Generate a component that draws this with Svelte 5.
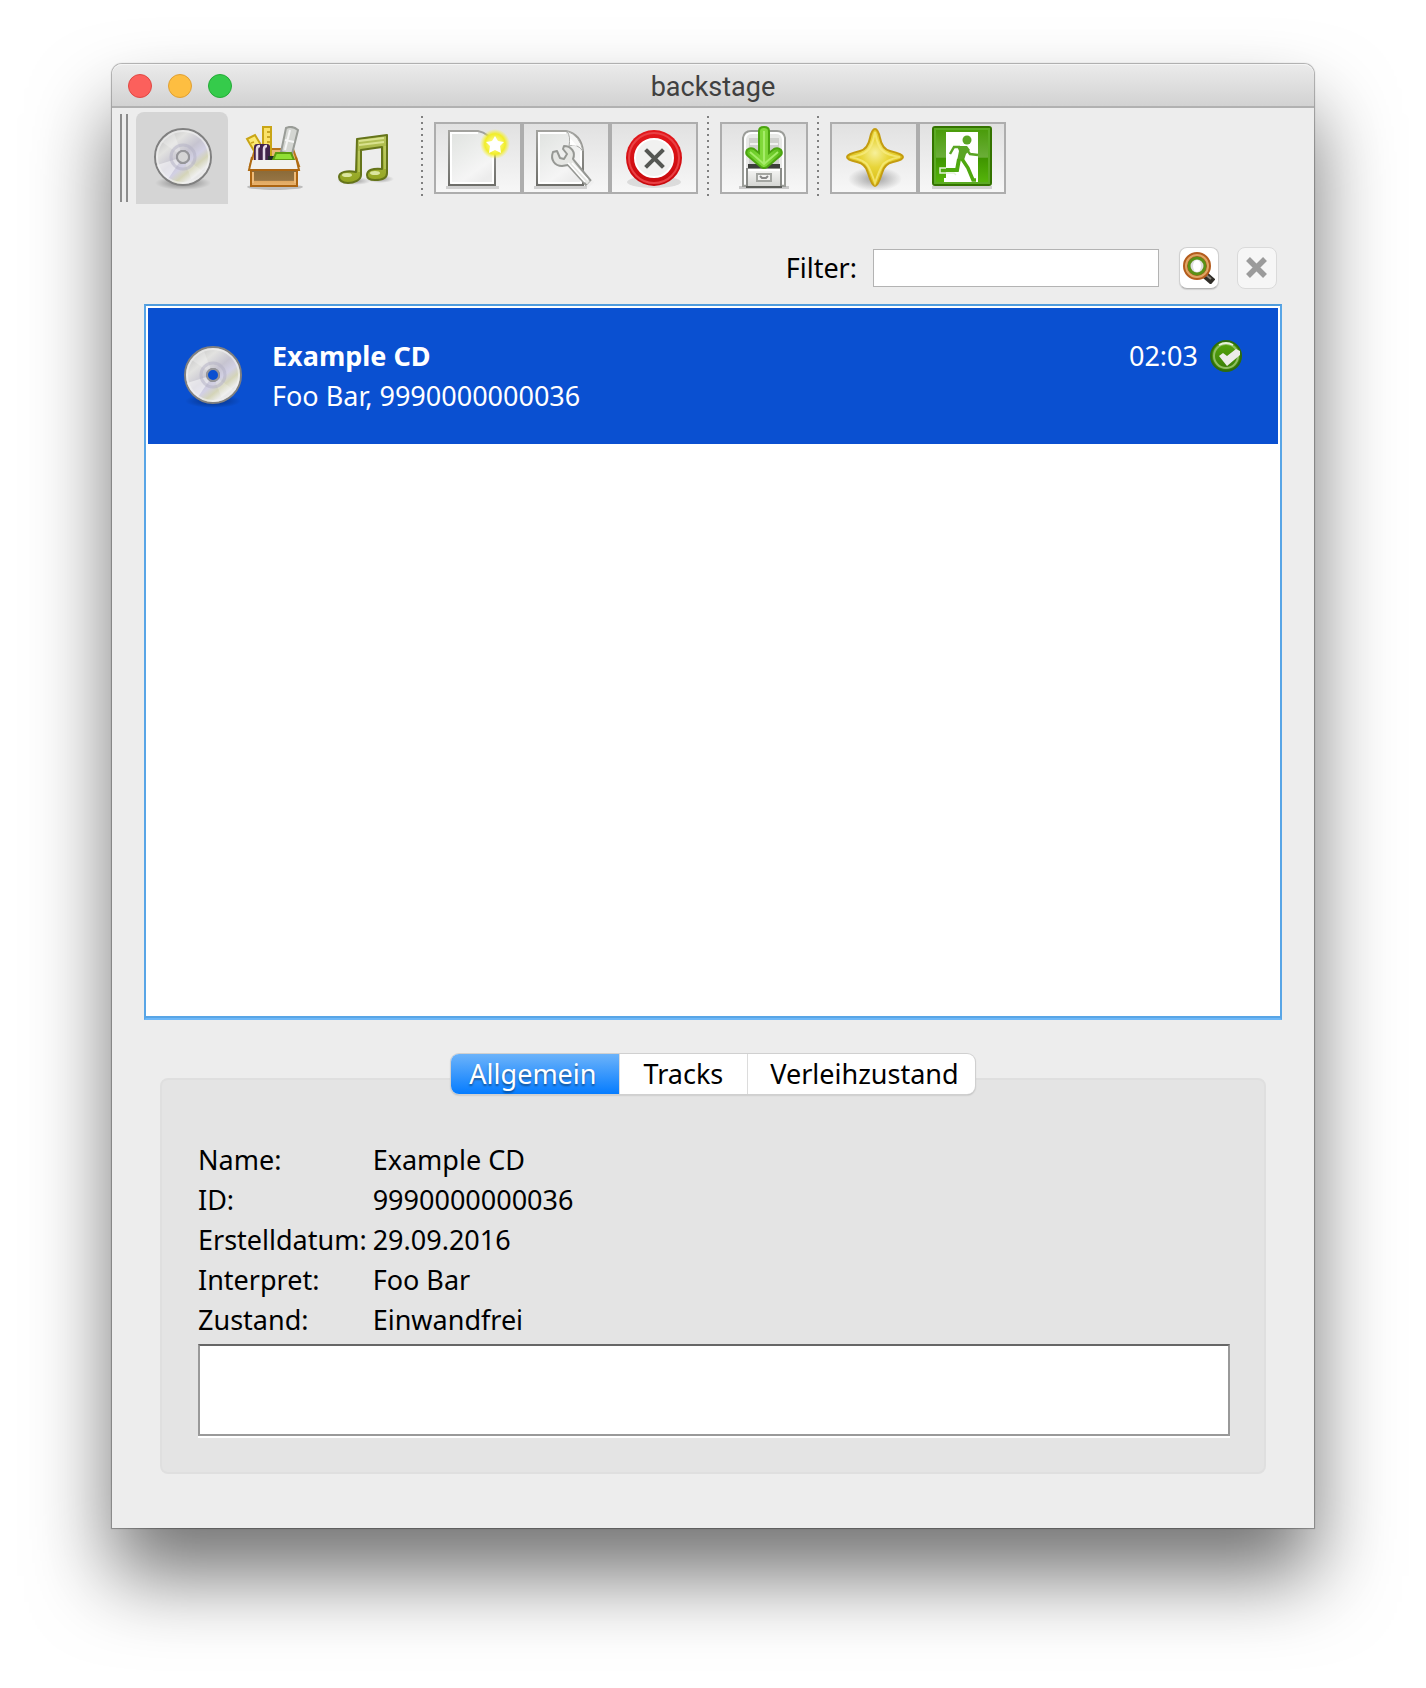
<script>
  const details = [
    ['Name:', 'Example CD'],
    ['ID:', '9990000000036'],
    ['Erstelldatum:', '29.09.2016'],
    ['Interpret:', 'Foo Bar'],
    ['Zustand:', 'Einwandfrei']
  ];
  const tabs = ['Allgemein', 'Tracks', 'Verleihzustand'];
  let activeTab = $state(0);
  let filter = $state('');
  let note = $state('');
</script>

{#snippet disc(id, hollow)}
  <svg class="icon" viewBox="0 0 64 64" aria-hidden="true">
    <defs>
      <linearGradient id="{id}-body" x1="0.15" y1="0.1" x2="0.85" y2="0.95">
        <stop offset="0" stop-color="#c6c6c6" />
        <stop offset="0.22" stop-color="#e2e2e0" />
        <stop offset="0.45" stop-color="#c6c4d0" />
        <stop offset="0.6" stop-color="#d2d0e4" />
        <stop offset="0.72" stop-color="#d4d4b8" />
        <stop offset="0.84" stop-color="#ececec" />
        <stop offset="1" stop-color="#c0c0c0" />
      </linearGradient>
      <radialGradient id="{id}-shade">
        <stop offset="0" stop-color="#000" stop-opacity="0.4" />
        <stop offset="1" stop-color="#000" stop-opacity="0" />
      </radialGradient>
    </defs>
    <ellipse cx="33" cy="57" rx="28" ry="7" fill="url(#{id}-shade)" />
    <path
      fill-rule="evenodd"
      fill="url(#{id}-body)"
      stroke="#808080"
      stroke-width="2"
      d="M33 3a28 28 0 1 1 0 56a28 28 0 1 1 0-56zM33 25a6 6 0 1 0 0 12a6 6 0 1 0 0-12z"
    />
    <path d="M33 31L12 16A26 26 0 0 1 24 7z" fill="#fff" opacity="0.25" />
    <path d="M33 31L54 46A26 26 0 0 1 42 55z" fill="#fff" opacity="0.2" />
    <path d="M33 31L7 39A27 27 0 0 0 18 53z" fill="#fff" opacity="0.5" />
    <circle cx="33" cy="31" r="26" fill="none" stroke="#f4f4f4" stroke-width="2" opacity="0.6" />
    <circle cx="33" cy="31" r="12" fill="none" stroke="#b2afc4" stroke-width="3" opacity="0.5" />
    <circle cx="33" cy="31" r="6" fill={hollow} stroke="#96969a" stroke-width="2" />
  </svg>
{/snippet}

<div class="desktop">
  <main class="window">
    <header class="titlebar">
      <div class="lights">
        <button class="light close" aria-label="Schließen"></button>
        <button class="light minimise" aria-label="Minimieren"></button>
        <button class="light zoom" aria-label="Vergrößern"></button>
      </div>
      <h1>backstage</h1>
    </header>

    <div class="toolbar" role="toolbar" aria-label="Werkzeuge">
      <span class="grip"></span>
      <button class="mode selected" aria-label="CDs">{@render disc('tool-disc', '#d5d5d5')}</button>
      <button class="mode" aria-label="Material">
        <svg class="icon" viewBox="0 0 64 64" aria-hidden="true">
          <defs>
            <linearGradient id="box-front" x1="0" y1="0" x2="0" y2="1">
              <stop offset="0" stop-color="#8a6a38" />
              <stop offset="0.65" stop-color="#967443" />
              <stop offset="0.7" stop-color="#e0a860" />
              <stop offset="1" stop-color="#e9b572" />
            </linearGradient>
          </defs>
          <ellipse cx="33" cy="61" rx="28" ry="3" fill="#000" opacity="0.2" />
          <path d="M13 23H51L57 40H8z" fill="#e9b877" stroke="#b8741c" stroke-width="2" />
          <path d="M5 13l8-4 9 15-7 6z" fill="#fbe972" stroke="#c9a516" stroke-width="2" />
          <path d="M9 17l3-1m0 6l4-2" stroke="#c9a516" stroke-width="1.5" />
          <path d="M21 1h8v30h-8z" fill="#fbe267" stroke="#c9a516" stroke-width="2" />
          <path d="M25 6h3m-3 5h3m-3 5h3m-3 5h3" stroke="#b8920c" stroke-width="1.5" />
          <path d="M44 2q6-3 12 2L50 28l-11-2z" fill="#d4d6d2" stroke="#999c97" stroke-width="2" />
          <path d="M48 4l-5 20m0-10l9 2" stroke="#f5f5f5" stroke-width="2" />
          <path d="M12 35V21q0-3 3-3h10q3 0 3 3v14z" fill="#42234b" />
          <path d="M15 35V23q0-3 3-3m4 15V23q0-3 3-3" stroke="#e7dbe9" stroke-width="2.5" fill="none" />
          <path d="M26 30h8v5h-8z" fill="#222c27" />
          <path d="M34 27h15l3 7H31z" fill="#90df35" stroke="#5c9b12" stroke-width="2" />
          <path d="M9 34H55L57 43H7z" fill="#f1f1ee" />
          <path d="M10 31l-3 13h50l-3-13" fill="none" stroke="#b06b12" stroke-width="2" />
          <path d="M9 44h46v16H9z" fill="url(#box-front)" stroke="#ac6512" stroke-width="2" />
          <path d="M11 46v11m42-11v11" stroke="#efbc7a" stroke-width="2" />
        </svg>
      </button>
      <button class="mode" aria-label="Musik">
        <svg class="icon" viewBox="0 0 64 64" aria-hidden="true">
          <defs>
            <linearGradient id="note-fill" x1="0" y1="0" x2="0" y2="1">
              <stop offset="0" stop-color="#b6c35c" />
              <stop offset="1" stop-color="#93a51f" />
            </linearGradient>
            <radialGradient id="note-shade">
              <stop offset="0" stop-color="#000" stop-opacity="0.35" />
              <stop offset="1" stop-color="#000" stop-opacity="0" />
            </radialGradient>
          </defs>
          <ellipse cx="20" cy="55" rx="17" ry="4" fill="url(#note-shade)" />
          <ellipse cx="46" cy="53" rx="14" ry="4" fill="url(#note-shade)" />
          <path
            d="M23 13L53 9V47C53 53 46 54 41 54C36 54 33 52 33 49C33 44 39 42 48 43V21L27 24V49C27 54 20 57 14 57C8 57 5 54 5 51C5 46 13 44 22 46z"
            fill="url(#note-fill)" stroke="#65741a" stroke-width="2" stroke-linejoin="round"
          />
          <path d="M25 15L50 12M25 19L50 16" stroke="#d9e28e" stroke-width="2" />
          <path d="M25 25v21M51 20v23" stroke="#c9d573" />
          <ellipse cx="13" cy="49" rx="5" ry="2" fill="#dce6a0" />
          <ellipse cx="41" cy="47" rx="5" ry="2" fill="#dce6a0" />
        </svg>
      </button>

      <span class="separator"></span>
      <div class="group">
        <button class="action" aria-label="Neu">
          <svg class="icon" viewBox="0 0 64 64" aria-hidden="true">
            <defs>
              <linearGradient id="paper" x1="0" y1="0" x2="0.6" y2="1">
                <stop offset="0" stop-color="#dfe2df" />
                <stop offset="0.8" stop-color="#f5f5f5" />
                <stop offset="1" stop-color="#ececec" />
              </linearGradient>
              <linearGradient id="paper-edge" x1="0" y1="0" x2="0" y2="1">
                <stop offset="0" stop-color="#a2a29e" />
                <stop offset="1" stop-color="#6e6e6a" />
              </linearGradient>
              <radialGradient id="glow">
                <stop offset="0" stop-color="#fff" />
                <stop offset="0.3" stop-color="#fbf87c" />
                <stop offset="0.68" stop-color="#f1ed28" />
                <stop offset="1" stop-color="#f5f04c" stop-opacity="0" />
              </radialGradient>
            </defs>
            <path d="M0 60h53v3H0z" fill="#000" opacity="0.15" />
            <path d="M3 5H32Q43 7 49 19V59H3z" fill="url(#paper)" stroke="url(#paper-edge)" stroke-width="2" />
            <path d="M5 57V7H32M5 57H47V22" fill="none" stroke="#fff" stroke-width="2" />
            <circle cx="49" cy="18" r="15" fill="url(#glow)" />
            <path d="M49 10l3 5 6 1-4 4 1 7-6-3-6 3 1-7-4-4 6-1z" fill="#fff" />
          </svg>
        </button>
        <button class="action" aria-label="Bearbeiten">
          <svg class="icon" viewBox="0 0 64 64" aria-hidden="true">
            <path d="M0 60h53v3H0z" fill="#000" opacity="0.15" />
            <path d="M3 5H32Q47 8 49 25V59H3z" fill="url(#paper)" stroke="url(#paper-edge)" stroke-width="2" />
            <path d="M5 57V7H32M5 57H47V25" fill="none" stroke="#fff" stroke-width="2" />
            <path d="M33 5Q37 11 35 20Q43 17 49 25Q46 10 33 5z" fill="#f6f6f5" stroke="#a9aaa7" />
            <path d="M36 12V19L43 20z" fill="#fff" />
            <path
              d="M19 26C16 34 21 40 28 40L34 39L53 60L57 55L43 38L39 33C42 26 37 20 30 20L29 23L33 28L30 33L26 32L23 25z"
              fill="#e6e7e4" stroke="#969894" stroke-width="2" stroke-linejoin="round"
            />
            <path d="M38 37L54 54M34 37L51 56" stroke="#fff" stroke-width="1.5" />
            <path d="M53 61l6-6" stroke="#f0f0f0" stroke-width="3" />
          </svg>
        </button>
        <button class="action" aria-label="Löschen">
          <svg class="icon" viewBox="0 0 64 64" aria-hidden="true">
            <defs>
              <linearGradient id="ring" x1="0" y1="0" x2="0" y2="1">
                <stop offset="0" stop-color="#e4181c" />
                <stop offset="1" stop-color="#c80a0e" />
              </linearGradient>
            </defs>
            <ellipse cx="32" cy="56" rx="27" ry="6" fill="#000" opacity="0.1" />
            <circle cx="32" cy="32" r="28" fill="url(#ring)" />
            <circle cx="32" cy="32" r="25" fill="none" stroke="#e94044" stroke-width="2" />
            <circle cx="32" cy="32" r="19" fill="#f1f1f0" stroke="#fff" stroke-width="2" />
            <path d="M25 25l15 15m0-15l-15 15" stroke="#555753" stroke-width="4" stroke-linecap="square" />
          </svg>
        </button>
      </div>

      <span class="separator"></span>
      <div class="group">
        <button class="action" aria-label="Speichern">
          <svg class="icon" viewBox="0 0 64 64" aria-hidden="true">
            <defs>
              <linearGradient id="arrow" x1="0" y1="0" x2="1" y2="0">
                <stop offset="0" stop-color="#5fc41c" />
                <stop offset="0.5" stop-color="#85dc3e" />
                <stop offset="1" stop-color="#55b716" />
              </linearGradient>
              <linearGradient id="drawer" x1="0" y1="0" x2="0" y2="1">
                <stop offset="0" stop-color="#f6f6f5" />
                <stop offset="1" stop-color="#d4d5d2" />
              </linearGradient>
            </defs>
            <path d="M7 60h50v3H7z" fill="#000" opacity="0.18" />
            <path d="M11 60V12Q12 5 19 5H45Q52 5 53 12V60z" fill="#e8e9e7" stroke="#9b9d99" stroke-width="2" />
            <path d="M13 58V13q1-6 7-6h24q6 0 7 6v45" fill="none" stroke="#fff" stroke-width="2" />
            <path d="M17 12h30v27H17z" fill="#d0d1ce" />
            <path d="M18 18h28M18 27h28" stroke="#f1f1f0" stroke-width="2" />
            <path d="M16 38h32v4H16z" fill="#3c3e3b" />
            <path d="M15 43H49V61H15z" fill="url(#drawer)" stroke="#8a8c88" stroke-width="2" />
            <path d="M14 61H50" stroke="#5c5e5a" stroke-width="2" />
            <path d="M16 44h32" stroke="#fff" stroke-width="2" />
            <rect x="25" y="48" width="14" height="7" fill="#f2f2f1" stroke="#a4a6a2" stroke-width="2" />
            <path d="M28 50l2 2h4l2-2" fill="none" stroke="#888" stroke-width="2" />
            <path
              d="M27 5Q27 1 32 1Q37 1 37 5V27L42 23Q46 21 49 24Q51 28 48 30L35 41Q32 43 29 41L16 30Q13 28 15 24Q18 21 22 23L27 27z"
              fill="url(#arrow)" stroke="#4ba40f" stroke-width="2"
            />
            <path d="M32 5V37M18 26L32 38L46 26" fill="none" stroke="#a5ec68" stroke-width="2" />
          </svg>
        </button>
      </div>

      <span class="separator"></span>
      <div class="group">
        <button class="action" aria-label="Info">
          <svg class="icon" viewBox="0 0 64 64" aria-hidden="true">
            <defs>
              <radialGradient id="gold" cx="0.5" cy="0.42" r="0.5">
                <stop offset="0" stop-color="#f7f09a" />
                <stop offset="0.5" stop-color="#e8d53a" />
                <stop offset="1" stop-color="#dcc01a" />
              </radialGradient>
              <radialGradient id="gold-shade">
                <stop offset="0" stop-color="#000" stop-opacity="0.35" />
                <stop offset="1" stop-color="#000" stop-opacity="0" />
              </radialGradient>
            </defs>
            <ellipse cx="33" cy="53" rx="27" ry="12" fill="url(#gold-shade)" />
            <path
              d="M33 3Q36 3 38 12Q40 23 48 25Q61 28 61 31Q61 34 51 36Q42 38 40 47Q36 60 33 60Q30 60 26 47Q24 38 15 36Q5 34 5 31Q5 28 18 25Q26 23 28 12Q30 3 33 3z"
              fill="url(#gold)" stroke="#c49c10" stroke-width="2"
            />
            <path
              d="M33 6Q36 22 41 25Q45 29 58 31Q43 34 40 40Q37 45 33 57Q29 45 26 40Q23 34 8 31Q21 29 25 25Q30 22 33 6z"
              fill="none" stroke="#f9ee86" stroke-width="2" opacity="0.7"
            />
          </svg>
        </button>
        <button class="action" aria-label="Beenden">
          <svg class="icon" viewBox="0 0 64 64" aria-hidden="true">
            <defs>
              <linearGradient id="exit-sign" x1="0" y1="0" x2="0" y2="1">
                <stop offset="0" stop-color="#479a06" />
                <stop offset="0.52" stop-color="#6bae38" />
                <stop offset="0.54" stop-color="#3f9500" />
                <stop offset="1" stop-color="#58b80c" />
              </linearGradient>
            </defs>
            <path d="M2 60h60v3H2z" fill="#000" opacity="0.15" />
            <rect x="3" y="1" width="58" height="58" rx="2" fill="url(#exit-sign)" stroke="#347300" stroke-width="2" />
            <rect x="5" y="3" width="54" height="54" fill="none" stroke="#5cab24" stroke-width="2" />
            <path d="M16 6H48V56H14V52H16z" fill="#fff" />
            <circle cx="37" cy="14" r="4.5" fill="#5aa524" />
            <path d="M20 28L24 21H30M37 24L40 28L48 29" fill="none" stroke="#5aa524" stroke-width="2.5" />
            <path d="M27 20H37L40 24L36 28L34 34L27 35L29 25z" fill="#5aa524" />
            <path d="M32 33L38 42L43 54H46" fill="none" stroke="#4fa80e" stroke-width="3.5" />
            <path d="M29 33L27 44H11V48" fill="none" stroke="#4fa80e" stroke-width="4" />
            <path d="M16 42H10V47H24L26 49" fill="none" stroke="#e4f2d8" stroke-width="1.5" />
          </svg>
        </button>
      </div>
    </div>

    <form class="filter" onsubmit={(event) => event.preventDefault()}>
      <label for="filter">Filter:</label>
      <input id="filter" type="text" bind:value={filter} />
      <button class="small" aria-label="Suchen">
        <svg class="glass" viewBox="0 0 32 32" aria-hidden="true">
          <path d="M22 23l8 7" stroke="#302d28" stroke-width="7" />
          <path d="M23 23l5 4" stroke="#85827a" stroke-width="2" />
          <circle cx="14" cy="14" r="11" fill="#fff" stroke="#b45c1d" stroke-width="6" />
          <circle cx="14" cy="14" r="11" fill="none" stroke="#dfa565" stroke-width="2" />
          <circle cx="14" cy="14" r="8" fill="#dedede" stroke="#5b9016" stroke-width="3" />
          <ellipse cx="14" cy="14" rx="4" ry="6" fill="#fff" />
        </svg>
      </button>
      <button class="small" type="button" disabled aria-label="Filter löschen">
        <svg class="glass" viewBox="0 0 32 32" aria-hidden="true">
          <path d="M7 7l17 17m0-17L7 24" stroke="#9b9b9b" stroke-width="5.5" />
        </svg>
      </button>
    </form>

    <ul class="list" role="listbox" aria-label="Medien">
      <li class="entry" role="option" aria-selected="true">
        {@render disc('entry-disc', '#0a50d1')}
        <div class="summary">
          <strong>Example CD</strong>
          <span>Foo Bar, 9990000000036</span>
        </div>
        <div class="status">
          <time>02:03</time>
          <svg class="check" viewBox="0 0 32 32" aria-hidden="true">
            <defs>
              <linearGradient id="tick-ground" x1="0" y1="0" x2="0" y2="1">
                <stop offset="0" stop-color="#57a80c" />
                <stop offset="1" stop-color="#397c09" />
              </linearGradient>
            </defs>
            <circle cx="16" cy="16" r="15" fill="url(#tick-ground)" stroke="#2e6c0c" stroke-width="2" />
            <circle cx="16" cy="16" r="12" fill="none" stroke="#8fbe63" stroke-width="2" />
            <path d="M9 5Q16 1 23 5" fill="none" stroke="#e6f0dc" stroke-width="2" />
            <path d="M9 16l4-3 4 3 9-7 4 2v4L17 26z" fill="#ececea" />
          </svg>
        </div>
      </li>
    </ul>

    <section class="details">
      <div class="tabs" role="tablist">
        {#each tabs as tab, index}
          <button
            class="tab"
            class:active={activeTab === index}
            role="tab"
            aria-selected={activeTab === index}
            onclick={() => (activeTab = index)}>{tab}</button
          >
        {/each}
      </div>
      <div class="panel" role="tabpanel">
        <dl>
          {#each details as [term, value]}
            <dt>{term}</dt>
            <dd>{value}</dd>
          {/each}
        </dl>
        <textarea aria-label="Bemerkung" bind:value={note}></textarea>
      </div>
    </section>
  </main>
</div>

<style>
  :global(body) {
    margin: 0;
    background: #fff;
  }
  .desktop,
  .desktop * {
    box-sizing: border-box;
  }
  .desktop {
    display: flex;
    min-height: 100vh;
    padding: 64px 112px 160px;
    overflow: hidden;
    font: 27px/40px 'Noto Sans', 'Open Sans', sans-serif;
    color: #000;
  }
  button {
    margin: 0;
    padding: 0;
    border: 0;
    font: inherit;
    color: inherit;
    background: none;
  }
  svg {
    display: block;
    flex: none;
  }
  .window {
    flex: 1;
    min-width: 0;
    display: flex;
    flex-direction: column;
    background: #ededed;
    border-radius: 10px 10px 0 0;
    box-shadow:
      0 0 1px 1px rgba(0, 0, 0, 0.3),
      0 48px 80px rgba(0, 0, 0, 0.55);
  }
  .titlebar {
    display: grid;
    grid-template-columns: 1fr auto 1fr;
    align-items: center;
    height: 44px;
    padding: 2px 16px 0;
    border-bottom: 2px solid #b1b1b1;
    border-radius: 10px 10px 0 0;
    background: linear-gradient(#ebebeb, #d2d2d2);
    box-shadow: inset 0 1px #f5f5f5;
  }
  h1 {
    margin: 0;
    padding-top: 2px;
    font: 27px/38px Roboto, sans-serif;
    color: #404040;
  }
  .lights {
    display: flex;
    gap: 16px;
  }
  .light {
    width: 24px;
    height: 24px;
    border: 1px solid;
    border-radius: 50%;
  }
  .close {
    background: #fc605c;
    border-color: #e04843;
  }
  .minimise {
    background: #fdbe41;
    border-color: #e0a033;
  }
  .zoom {
    background: #35cb4b;
    border-color: #24ab37;
  }

  .toolbar {
    display: flex;
    align-items: center;
    height: 100px;
    padding: 0 8px;
  }
  .grip {
    width: 8px;
    height: 88px;
    margin-right: 8px;
    border: solid #8c8c8c;
    border-width: 0 2px;
  }
  .mode {
    display: grid;
    place-items: center;
    width: 92px;
    height: 92px;
    border-radius: 8px 8px 0 0;
  }
  .mode.selected {
    background: #d5d5d5;
  }
  .icon {
    width: 64px;
    height: 64px;
  }
  .separator {
    width: 2px;
    height: 84px;
    margin: 0 11px 0 9px;
    background: repeating-linear-gradient(#808080 0 2px, transparent 2px 6px);
  }
  .group {
    display: flex;
  }
  .action {
    display: grid;
    place-items: center;
    width: 88px;
    height: 72px;
    border: 2px solid #adadad;
    background: linear-gradient(#e1e1e1, #f7f7f7);
  }

  .filter {
    display: flex;
    align-items: center;
    justify-content: flex-end;
    padding: 39px 37px 15px 32px;
  }
  .filter input {
    width: 286px;
    height: 38px;
    margin: 0 20px 0 16px;
    padding: 0 6px;
    border: 1px solid #b3b3b3;
    border-radius: 0;
    font: inherit;
    background: #fff;
    outline: 0;
  }
  .small {
    display: grid;
    place-items: center;
    width: 40px;
    height: 42px;
    border: 1px solid #d0d0d0;
    border-bottom-color: #b4b4b4;
    border-radius: 8px;
    background: #fff;
    box-shadow: 0 1px 1px rgba(0, 0, 0, 0.12);
  }
  .small + .small {
    margin-left: 18px;
  }
  .small:disabled {
    border-color: #dadada;
    background: #f6f6f6;
    box-shadow: none;
  }
  .glass,
  .check {
    width: 32px;
    height: 32px;
  }

  .list {
    flex: 1;
    margin: 0 32px;
    padding: 2px;
    list-style: none;
    border: 2px solid #58a5e6;
    border-top-color: #4f9cdd;
    border-bottom-color: #6cb7f8;
    background: #fff;
    box-shadow: inset 0 -2px #58a5e6;
  }
  .entry {
    display: flex;
    align-items: flex-start;
    padding: 28px 36px 28px 32px;
    color: #fff;
    background: #0a50d1;
  }
  .entry .icon {
    align-self: center;
    margin-right: 28px;
  }
  .summary {
    flex: 1;
    display: flex;
    flex-direction: column;
  }
  .status {
    display: flex;
    align-items: center;
    gap: 12px;
  }

  .details {
    padding: 34px 48px 54px;
  }
  .tabs {
    position: relative;
    display: flex;
    width: max-content;
    margin: 0 auto -16px;
    border-radius: 8px;
    background: #fff;
    box-shadow:
      0 0 0 1px #d0d0d0,
      0 1px 2px rgba(0, 0, 0, 0.3);
  }
  .tab {
    height: 40px;
    padding: 0 22px 0 18px;
  }
  .tab + .tab {
    padding: 0 16px 0 22px;
    border-left: 1px solid #dcdcdc;
  }
  .tab:nth-child(2) {
    padding: 0 24px;
  }
  .tab:first-child {
    border-radius: 8px 0 0 8px;
  }
  .tab:last-child {
    border-radius: 0 8px 8px 0;
  }
  .tab.active {
    color: #fff;
    background: linear-gradient(#6cb3fa, #057cff);
    text-shadow: 0 2px 2px rgba(0, 0, 0, 0.4);
  }
  .panel {
    padding: 60px 34px 36px 36px;
    border: 2px solid #dfdfdf;
    border-radius: 8px;
    background: #e4e4e4;
  }
  dl {
    display: grid;
    grid-template-columns: max-content 1fr;
    column-gap: 6px;
    margin: 0;
  }
  dd {
    margin: 0;
  }
  textarea {
    display: block;
    width: 100%;
    height: 92px;
    margin: 4px 0 0;
    padding: 4px;
    border: 2px solid #999;
    border-top-color: #666;
    border-radius: 0;
    font: inherit;
    background: #fff;
    box-shadow: 0 2px #fff;
    resize: none;
    outline: 0;
  }
</style>
